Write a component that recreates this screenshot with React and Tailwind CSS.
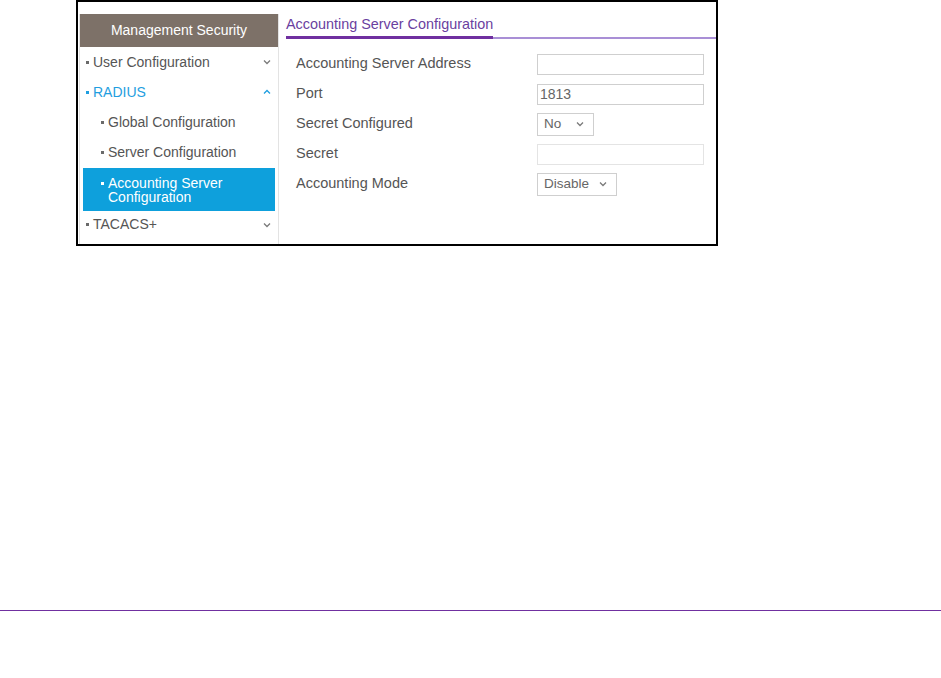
import React from 'react';

const Chevron = ({ up, color = '#7a7a7a' }) => (
    <svg width="8" height="6" viewBox="0 0 8 6" className="shrink-0">
        <polyline
            points={up ? '1,4.5 4,1.5 7,4.5' : '1,1.5 4,4.5 7,1.5'}
            fill="none"
            stroke={color}
            strokeWidth="1.3"
        />
    </svg>
);

const Bullet = ({ className = 'bg-[#6a6a6a]' }) => (
    <span className={`inline-block w-[3px] h-[3px] shrink-0 ${className}`} />
);

function SideItem({ label, open, active, sub }) {
    return (
        <div className={`h-[30px] flex items-center pr-[7px] ${sub ? 'pl-[21px]' : 'pl-[6px]'}`}>
            <Bullet className={active ? 'bg-[#1f9ee0]' : 'bg-[#6a6a6a]'} />
            <span className={`ml-[4px] flex-1 text-[14px] ${active ? 'text-[#1f9ee0]' : 'text-[#555]'}`}>{label}</span>
            {open !== undefined && <Chevron up={open} color={active ? '#1f9ee0' : '#7a7a7a'} />}
        </div>
    );
}

function Field({ label, children }) {
    return (
        <div className="h-[30px] flex items-center">
            <span className="w-[241px] text-[14.5px] text-[#555]">{label}</span>
            {children}
        </div>
    );
}

function TextBox({ value = '', faded }) {
    return (
        <div className={`w-[167px] h-[21px] border flex items-center px-[2px] text-[14px] text-[#666] ${faded ? 'border-[#e4e4e4]' : 'border-[#cfcfcf]'}`}>
            {value}
        </div>
    );
}

function SelectBox({ value, width }) {
    return (
        <div className={`${width} h-[23px] border border-[#cfcfcf] flex items-center justify-between pl-[6px] pr-[9px] text-[13.5px] text-[#666]`}>
            <span>{value}</span>
            <Chevron />
        </div>
    );
}

export default function App() {
    return (
        <div className="w-[941px] h-[678px] bg-white font-['Liberation_Sans',Arial,sans-serif] overflow-hidden">
            <div className="pl-[76px]">
                <div className="w-[642px] h-[246px] border-2 border-black flex pt-[12px] pl-[1px]">
                    {/* Sidebar */}
                    <div className="w-[200px] border-x border-[#e3e3e3] flex flex-col">
                        <div className="h-[33px] bg-[#7d7168] text-white text-[14px] flex items-center justify-center">
                            Management Security
                        </div>
                        <SideItem label="User Configuration" open={false} />
                        <SideItem label="RADIUS" open={true} active />
                        <SideItem label="Global Configuration" sub />
                        <SideItem label="Server Configuration" sub />
                        <div className="mx-[3px] mt-[1px] h-[43px] bg-[#0ea0dc] flex items-center pl-[18px] pr-[6px]">
                            <div className="flex items-start text-white text-[14px] leading-[14px]">
                                <Bullet className="bg-white mt-[6px]" />
                                <span className="ml-[4px]">Accounting Server Configuration</span>
                            </div>
                        </div>
                        <div className="h-[27px] flex items-center pl-[6px] pr-[7px]">
                            <Bullet />
                            <span className="ml-[4px] flex-1 text-[14px] text-[#555]">TACACS+</span>
                            <Chevron />
                        </div>
                    </div>

                    {/* Content */}
                    <div className="flex-1 pl-[7px] pr-0">
                        <div className="flex border-b-2 border-[#a98fd6]">
                            <span className="-mb-[2px] pb-[2px] leading-[20px] border-b-[3px] border-[#7030a0] text-[14.4px] text-[#6a3fa0]">
                                Accounting Server Configuration
                            </span>
                        </div>
                        <div className="mt-[10px] pl-[10px]">
                            <Field label="Accounting Server Address"><TextBox /></Field>
                            <Field label="Port"><TextBox value="1813" /></Field>
                            <Field label="Secret Configured"><SelectBox value="No" width="w-[57px]" /></Field>
                            <Field label="Secret"><TextBox faded /></Field>
                            <Field label="Accounting Mode"><SelectBox value="Disable" width="w-[80px]" /></Field>
                        </div>
                    </div>
                </div>
            </div>
            <div className="mt-[364px] h-px bg-[#7030a0]" />
        </div>
    );
}
